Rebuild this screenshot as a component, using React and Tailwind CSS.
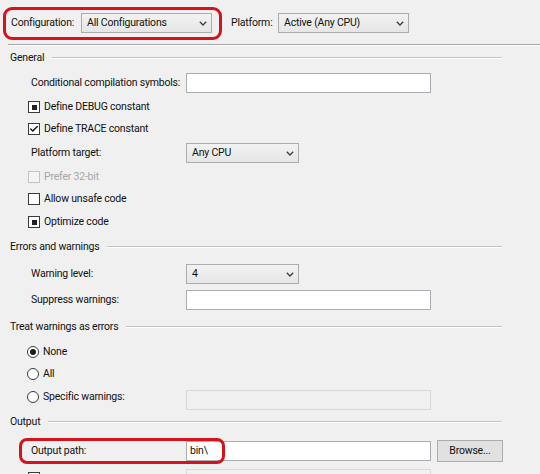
import { Check } from 'lucide-react'

const font = "font-['Segoe_UI','Roboto','Noto_Sans',sans-serif]"

function Chevron() {
  return (
    <svg width="8" height="5" viewBox="0 0 8 5" className="shrink-0">
      <path d="M0.8 0.8 L4 4 L7.2 0.8" fill="none" stroke="#3c3c3c" strokeWidth="1.3" />
    </svg>
  )
}

function Dropdown({ value, className = '' }) {
  return (
    <div className={`flex h-[20px] items-center justify-between border border-[#acacac] bg-gradient-to-b from-[#f2f2f2] to-[#e6e6e6] pl-[5px] pr-[4px] ${className}`}>
      <span className="leading-none">{value}</span>
      <Chevron />
    </div>
  )
}

function TextBox({ value = '', disabled = false, className = '' }) {
  return (
    <div className={`flex h-[20px] w-[245px] items-center border px-[2px] ${disabled ? 'border-[#d9d9d9] bg-[#f0f0f0]' : 'border-[#abadb3] bg-white'} ${className}`}>
      {value}
    </div>
  )
}

function CheckBox({ state, disabled = false }) {
  return (
    <div className={`flex h-[12px] w-[12px] shrink-0 items-center justify-center border ${disabled ? 'border-[#c4c4c4] bg-[#f4f4f4]' : 'border-[#3a3a3a] bg-white'}`}>
      {state === 'square' && <div className="h-[5px] w-[5px] bg-[#222]" />}
      {state === 'check' && <Check size={10} strokeWidth={3.6} color="#1a1a1a" />}
    </div>
  )
}

function Radio({ on }) {
  return (
    <div className="flex h-[12px] w-[12px] shrink-0 items-center justify-center rounded-full border border-[#3a3a3a] bg-white">
      {on && <div className="h-[6px] w-[6px] rounded-full bg-[#1a1a1a]" />}
    </div>
  )
}

function Section({ title, h }) {
  return (
    <div className={`flex items-center pl-[10px] ${h}`}>
      <span className="whitespace-nowrap">{title}</span>
      <div className="ml-[8px] mr-[38px] h-[2px] flex-1 border-t border-b border-t-[#c3c3c3] border-b-white" />
    </div>
  )
}

// label in the left column, control starting at x=186
function FieldRow({ label, h, children }) {
  return (
    <div className={`flex items-center ${h}`}>
      <span className="w-[186px] shrink-0 whitespace-nowrap pl-[31px]">{label}</span>
      {children}
    </div>
  )
}

function CheckRow({ label, state, h, disabled = false }) {
  return (
    <div className={`flex items-center gap-[4px] pl-[28px] ${h}`}>
      <CheckBox state={state} disabled={disabled} />
      <span className={`whitespace-nowrap ${disabled ? 'text-[#a6a6a6]' : ''}`}>{label}</span>
    </div>
  )
}

function RadioRow({ label, on, h, children }) {
  return (
    <div className={`flex items-center ${h}`}>
      <div className="flex w-[186px] shrink-0 items-center gap-[4px] pl-[27px]">
        <Radio on={on} />
        <span className="whitespace-nowrap">{label}</span>
      </div>
      {children}
    </div>
  )
}

export default function App() {
  return (
    <div className={`relative h-[474px] w-[540px] overflow-hidden bg-[#f0f0f0] text-[10.5px] leading-[20px] tracking-[-0.2px] text-[#111] ${font}`}>
      {/* configuration / platform bar */}
      <div className="flex h-[44px] items-center pt-[2px]">
        <div className="ml-[3px] flex h-[33px] items-center rounded-[9px] border-[3px] border-[#d4131c] pl-[5px] pr-[7px]">
          <span className="w-[70px] whitespace-nowrap">Configuration:</span>
          <Dropdown value="All Configurations" className="w-[131px]" />
        </div>
        <span className="ml-[9px] w-[47px] whitespace-nowrap">Platform:</span>
        <Dropdown value="Active (Any CPU)" className="w-[131px]" />
      </div>
      <div className="ml-[8px] h-[2px] border-t border-b border-t-[#a6a6a6] border-b-white" />

      <Section title="General" h="h-[23px]" />
      <FieldRow label="Conditional compilation symbols:" h="h-[28px]">
        <TextBox />
      </FieldRow>
      <CheckRow label="Define DEBUG constant" state="square" h="h-[20px]" />
      <CheckRow label="Define TRACE constant" state="check" h="h-[24px]" />
      <FieldRow label="Platform target:" h="h-[24px]">
        <Dropdown value="Any CPU" className="w-[113px] h-[19px]" />
      </FieldRow>
      <CheckRow label="Prefer 32-bit" disabled h="h-[24px]" />
      <CheckRow label="Allow unsafe code" h="h-[20px]" />
      <CheckRow label="Optimize code" state="square" h="h-[26px]" />

      <Section title="Errors and warnings" h="h-[24px]" />
      <FieldRow label="Warning level:" h="h-[30px]">
        <Dropdown value="4" className="w-[113px] h-[19px]" />
      </FieldRow>
      <FieldRow label="Suppress warnings:" h="h-[22px]">
        <TextBox className="h-[19px]" />
      </FieldRow>

      <Section title="Treat warnings as errors" h="h-[32px]" />
      <RadioRow label="None" on h="h-[18px]" />
      <RadioRow label="All" h="h-[26px]" />
      <RadioRow label="Specific warnings:" h="h-[20px]">
        <TextBox disabled className="mt-[6px] h-[17px]" />
      </RadioRow>

      <Section title="Output" h="h-[30px]" />
      <FieldRow label="Output path:" h="h-[28px]">
        <TextBox value="bin\" className="pl-[3px]" />
        <button className="ml-[6px] h-[22px] w-[66px] border border-[#adadad] bg-[#e1e1e1] leading-none">
          Browse...
        </button>
      </FieldRow>
      <div className="flex h-[16px] items-start">
        <div className="ml-[28px] mt-[7px]">
          <CheckBox />
        </div>
        <div className="ml-[146px] mt-[4px] h-[20px] w-[245px] border border-[#d9d9d9] bg-[#f0f0f0]" />
      </div>

      {/* highlight around the output path field */}
      <div className="absolute left-[19px] top-[438px] h-[26px] w-[206px] rounded-[8px] border-[3px] border-[#d4131c]" />
    </div>
  )
}
